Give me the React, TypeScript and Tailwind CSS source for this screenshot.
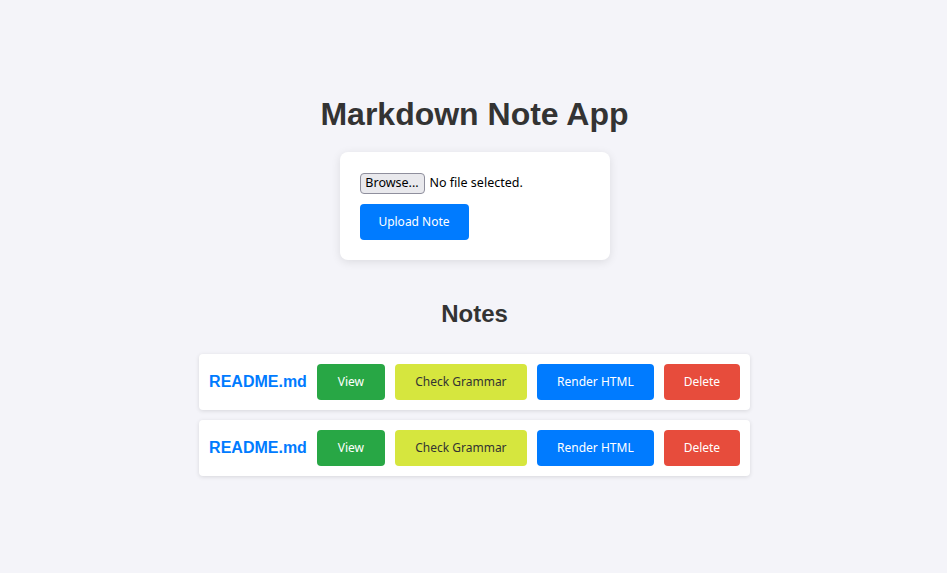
import React from 'react';

const notes = ['README.md', 'README.md'];

const btn = "h-9 rounded-[4px] text-[12px] leading-none flex items-center justify-center";

const App: React.FC = () => {
  return (
    <div className="min-h-screen bg-[#f4f4f9] flex flex-col items-center pt-[96px] pl-[2px] font-['Liberation_Sans',Arial,sans-serif]">
      <h1 className="text-[32px] leading-[37px] font-bold text-[#333]">Markdown Note App</h1>

      <div className="mt-[19px] w-[270px] h-[108px] bg-white rounded-lg shadow-[0_2px_10px_rgba(0,0,0,0.1)] px-5 pt-[21px] flex flex-col items-start">
        <label className="flex items-center h-[21px] gap-[5px] text-[13px] text-black font-['Noto_Sans',sans-serif] cursor-pointer">
          <input type="file" className="hidden" />
          <span className="h-[21px] w-[65px] flex items-center justify-center bg-[#e9e9ed] border border-[#8f8f9d] rounded-[4px] text-[12.5px]">Browse...</span>
          <span className="text-[12.5px]">No file selected.</span>
        </label>
        <button className={`${btn} w-[109px] mt-[10px] bg-[#007bff] text-white font-['Noto_Sans',sans-serif]`}>Upload Note</button>
      </div>

      <h2 className="mt-[40px] text-[24px] leading-[28px] font-bold text-[#333]">Notes</h2>

      <div className="mt-[26px] flex flex-col gap-[10px]">
        {notes.map((n, i) => (
          <div key={i} className="bg-white rounded-[4px] shadow-[0_1px_4px_rgba(0,0,0,0.12)] p-[10px] flex items-center gap-[10px]">
            <span className="text-[16px] font-bold text-[#007bff]">{n}</span>
            <div className="flex gap-[10px] font-['Noto_Sans',sans-serif]">
              <button className={`${btn} w-[68px] bg-[#28a745] text-white`}>View</button>
              <button className={`${btn} w-[132px] bg-[#d6e63e] text-[#333]`}>Check Grammar</button>
              <button className={`${btn} w-[117px] bg-[#007bff] text-white`}>Render HTML</button>
              <button className={`${btn} w-[76px] bg-[#e74c3c] text-white`}>Delete</button>
            </div>
          </div>
        ))}
      </div>
    </div>
  );
};

export default App;
